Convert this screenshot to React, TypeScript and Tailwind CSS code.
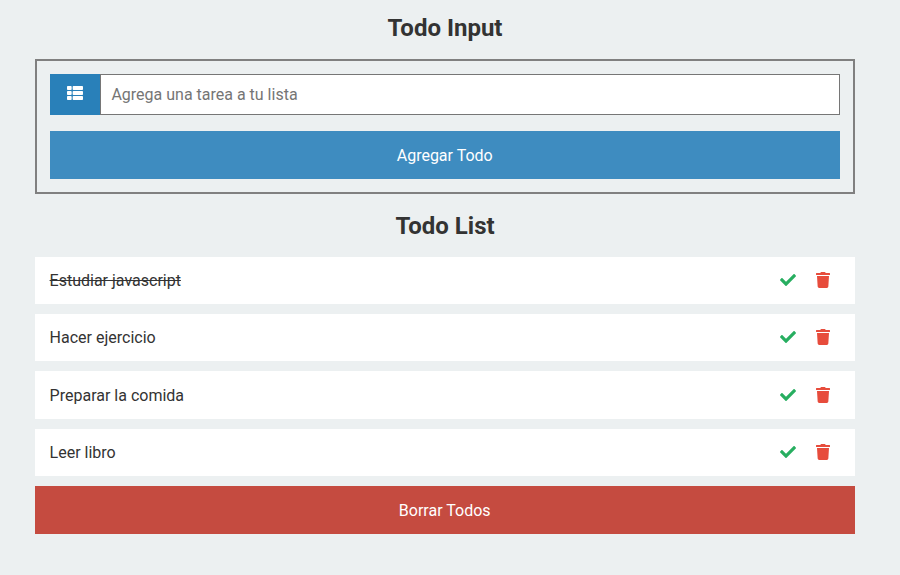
import { FaCheck, FaThList, FaTrash } from "react-icons/fa";

type Todo = { text: string; done: boolean };

const todos: Todo[] = [
  { text: "Estudiar javascript", done: true },
  { text: "Hacer ejercicio", done: false },
  { text: "Preparar la comida", done: false },
  { text: "Leer libro", done: false },
];

function Title({ children }: { children: string }) {
  return <h2 className="text-center text-2xl leading-7 font-bold">{children}</h2>;
}

function TodoRow({ todo }: { todo: Todo }) {
  return (
    <li className="flex h-[47.4px] items-center justify-between bg-white pr-[25px] pl-[14.6px]">
      <span className={todo.done ? "pt-px line-through" : "pt-px"}>{todo.text}</span>
      <div className="flex items-center gap-5 pb-[0.8px]">
        <button aria-label="Completar">
          <FaCheck className="block size-4 text-[#27ae60]" />
        </button>
        <button aria-label="Borrar">
          <FaTrash className="block h-4 w-3.5 text-[#e74c3c]" />
        </button>
      </div>
    </li>
  );
}

export default function App() {
  return (
    <div className="min-h-screen bg-[#ecf0f1] px-[35px] pt-[14px] pr-[45px] font-['Roboto',sans-serif] text-base text-[#333333]">
      <Title>Todo Input</Title>
      <section className="mt-[17px] border-2 border-[#808080] p-[13px]">
        <div className="flex h-[41px]">
          <span className="flex w-[50px] items-center justify-center bg-[#2980b9] pb-[3px] text-white">
            <FaThList className="size-4" />
          </span>
          <input
            className="min-w-0 flex-1 border border-[#767676] bg-white px-[10.4px] outline-none placeholder:text-[#757575]"
            placeholder="Agrega una tarea a tu lista"
          />
        </div>
        <button className="mt-4 h-12 w-full bg-[#3e8cc0] pt-0.5 pr-[0.6px] text-white">
          Agregar Todo
        </button>
      </section>
      <div className="mt-[18px]">
        <Title>Todo List</Title>
      </div>
      <ul className="mt-[16.6px] flex flex-col gap-[10px]">
        {todos.map((todo) => (
          <TodoRow key={todo.text} todo={todo} />
        ))}
      </ul>
      <button className="mt-[9.8px] h-12 w-full bg-[#c54b40] pt-0.5 pr-[0.6px] text-white">
        Borrar Todos
      </button>
    </div>
  );
}
